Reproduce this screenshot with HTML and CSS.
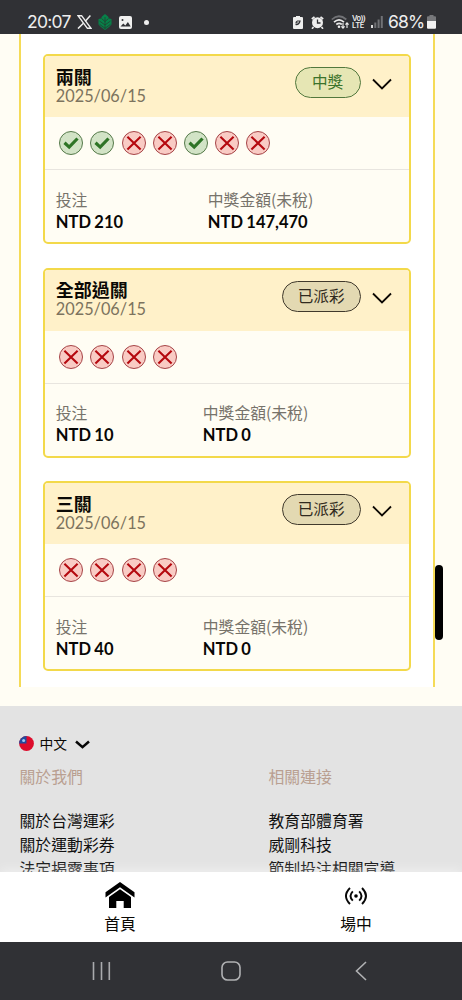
FILE: index.html
```html
<!DOCTYPE html>
<html lang="zh-Hant">
<head>
<meta charset="utf-8">
<title>投注紀錄</title>
<link rel="stylesheet" href="styles.css">
</head>
<body>
<svg class="defs" width="0" height="0">
  <symbol id="win" viewBox="0 0 24 24"><circle cx="12" cy="12" r="11.5" fill="#d2e3c6" stroke="#55794a" stroke-width="1"/><path d="M5.500 11.800l4.700 4.300 8.300-8.600" fill="none" stroke="#2e7426" stroke-width="3.2"/></symbol>
  <symbol id="lose" viewBox="0 0 24 24"><circle cx="12" cy="12" r="11.5" fill="#f9cbc4" stroke="#a54447" stroke-width="1"/><path d="M5.4 5.7l13.2 12.8M18.6 5.7L5.4 18.5" fill="none" stroke="#b5090f" stroke-width="2.1"/></symbol>
  <symbol id="down" viewBox="0 0 20 12"><path d="M1 1.5l9 9 9-9" fill="none" stroke="#0d0904" stroke-width="1.8"/></symbol>
</svg>
<div class="screen">
  <header class="status">
    <span class="time">20:07</span>
    <svg class="x-logo" width="15" height="14" viewBox="0 0 15 14"><path d="M1 .7h3.6L14 13.3h-3.6z" fill="none" stroke="#eee" stroke-width="1.4"/><path d="M13.4.5L8.3 6.2M6.4 8.2L1 13.6" stroke="#eee" stroke-width="1.5"/></svg>
    <svg class="leaf" width="14" height="16" viewBox="0 0 14 16"><path d="M7 0l3 2.500 1 2 2.500.5v5.500L11 13l-4 3-4-3-2.500-2.500V5L3 4.500l1-2z" fill="#078149"/><path d="M7 3v12M7 7.500L3.500 4.500M7 7.500l3.500-3M7 11L1.500 7M7 11l5.500-4M7 14.300l-5.500-4M7 14.300l5.500-4" stroke="#26382f" stroke-width=".7" fill="none"/></svg>
    <svg class="photo" width="13" height="13" viewBox="0 0 13 13"><rect width="13" height="13" rx="2" fill="#f0f0f0"/><path d="M1.500 10.500l2.800-3 2 2 2.600-3.500 2.800 4.500z" fill="#303135"/><circle cx="3.500" cy="4" r="1" fill="#303135"/></svg>
    <i class="dot"></i>
    <span class="grow"></span>
    <svg class="saver" width="10" height="13" viewBox="0 0 10 13"><path d="M3 0h4v1h2q1 0 1 1v10q0 1-1 1H1q-1 0-1-1V2q0-1 1-1h2z" fill="#eee"/><path d="M2.500 8.500q3.500 1 4.500-3.500H4.500q-1.500.5-1.500 2h2.500" fill="none" stroke="#303135" stroke-width="1.200"/></svg>
    <svg class="alarm" width="13" height="13" viewBox="0 0 13 13"><circle cx="6.500" cy="6.700" r="5.500" fill="#eee"/><path d="M.8 3L3.500.8M12.200 3L9.500.8M2.500 11L1 12.700M10.500 11l1.500 1.700" stroke="#eee" stroke-width="1.700"/><path d="M6.500 3.500v3.500h3" fill="none" stroke="#303135" stroke-width="1.300"/></svg>
    <svg class="wifi" width="18" height="14" viewBox="0 0 18 14"><g fill="none" stroke-width="1.700"><path d="M.8 4.500q7-6.500 14.500 0" stroke="#717276"/><path d="M3 7.200q5-4.500 10 0M5.300 9.500q3-2.300 5.500 0" stroke="#e9e9e9"/></g><circle cx="8" cy="11.800" r="1.300" fill="#eee"/><path d="M12 8v5M10.400 11.300l1.600 1.900 1.600-1.900M16 13V8M14.500 9.700L16 7.900l1.600 1.800" fill="none" stroke="#eee" stroke-width="1.100"/></svg>
    <span class="lte"><b>Vo))</b><b>LTE</b></span>
    <svg class="signal" width="12" height="12" viewBox="0 0 12 12"><path d="M0 9h2v3H0z" fill="#ddd"/><path d="M3.300 6.500h2V12h-2zM6.600 3.500h2V12h-2zM9.800 0h2v12h-2z" fill="#717276"/></svg>
    <span class="percent">68%</span>
    <svg class="battery" width="9" height="14" viewBox="0 0 9 14"><path d="M2.500 0h4v1.300H8q1 0 1 1V6H0V2.300q0-1 1-1h1.500z" fill="#77787b"/><path d="M0 6h9v6.500q0 1.300-1 1.300H1q-1 0-1-1.300z" fill="#f2f2f2"/></svg>
  </header>

  <main class="page">
    <section class="panel">
      <article class="card">
        <div class="head"><div class="name"><h2>兩關</h2><time>2025/06/15</time></div><span class="badge won">中獎</span><svg class="chev"><use href="#down"/></svg></div>
        <div class="marks"><svg><use href="#win"/></svg><svg><use href="#win"/></svg><svg><use href="#lose"/></svg><svg><use href="#lose"/></svg><svg><use href="#win"/></svg><svg><use href="#lose"/></svg><svg><use href="#lose"/></svg></div>
        <dl class="sums wide"><div><dt>投注</dt><dd>NTD 210</dd></div><div><dt>中獎金額(未稅)</dt><dd>NTD 147,470</dd></div></dl>
      </article>
      <article class="card">
        <div class="head"><div class="name"><h2>全部過關</h2><time>2025/06/15</time></div><span class="badge">已派彩</span><svg class="chev"><use href="#down"/></svg></div>
        <div class="marks"><svg><use href="#lose"/></svg><svg><use href="#lose"/></svg><svg><use href="#lose"/></svg><svg><use href="#lose"/></svg></div>
        <dl class="sums"><div><dt>投注</dt><dd>NTD 10</dd></div><div><dt>中獎金額(未稅)</dt><dd>NTD 0</dd></div></dl>
      </article>
      <article class="card">
        <div class="head"><div class="name"><h2>三關</h2><time>2025/06/15</time></div><span class="badge">已派彩</span><svg class="chev"><use href="#down"/></svg></div>
        <div class="marks"><svg><use href="#lose"/></svg><svg><use href="#lose"/></svg><svg><use href="#lose"/></svg><svg><use href="#lose"/></svg></div>
        <dl class="sums"><div><dt>投注</dt><dd>NTD 40</dd></div><div><dt>中獎金額(未稅)</dt><dd>NTD 0</dd></div></dl>
      </article>
    </section>
    <i class="thumb"></i>
  </main>

  <footer class="footer">
    <div class="lang">
      <svg class="flag" width="15" height="15" viewBox="0 0 15 15"><circle cx="7.500" cy="7.500" r="7.400" fill="#dd0c2c"/><path d="M7.500 7.500V.1A7.400 7.400 0 0 0 .1 7.500z" fill="#214b9e"/><circle cx="4.600" cy="4.400" r="1.500" fill="#9fc8f3"/></svg>
      <span>中文</span>
      <svg class="lang-chev" width="15" height="9" viewBox="0 0 15 9"><path d="M1 1.500l6.500 5.700L14 1.500" fill="none" stroke="#080808" stroke-width="2.500"/></svg>
    </div>
    <div class="links">
      <div><h3>關於我們</h3><p>關於台灣運彩</p><p>關於運動彩券</p><p>法定揭露事項</p></div>
      <div><h3>相關連接</h3><p>教育部體育署</p><p>威剛科技</p><p>節制投注相關宣導</p></div>
    </div>
  </footer>

  <nav class="tabs">
    <a class="home"><svg width="30" height="27" viewBox="0 0 30 27"><path d="M15 0l14.500 10.200v5.300L15 5.200.5 15.500v-5.300z" fill="#000"/><path d="M15 7.300l11 7.800V26h-7.300v-7h-7.400v7H4V15.100z" fill="#000"/></svg><span>首頁</span></a>
    <a class="live"><svg width="24" height="20" viewBox="0 0 24 20"><g fill="none" stroke="#080808" stroke-width="1.900"><path d="M6 2Q-2 10 6 18M18 2q8 8 0 16M8.800 5.300q-4.600 4.700 0 9.400M15.200 5.300q4.600 4.700 0 9.400"/></g><circle cx="12" cy="10" r="1.800"/></svg><span>場中</span></a>
  </nav>
  <div class="system">
    <svg width="20" height="20" viewBox="0 0 20 20"><path d="M2.500 1v18M10.500 1v18M18.300 1v18" stroke="#a9aaad" stroke-width="1.600"/></svg>
    <svg width="20" height="20" viewBox="0 0 20 20"><rect x="1" y="1" width="18" height="18" rx="5.500" fill="none" stroke="#b0b1b3" stroke-width="1.600"/></svg>
    <svg width="20" height="20" viewBox="0 0 20 20"><path d="M15 1L5.500 10l9.500 9" fill="none" stroke="#b0b1b3" stroke-width="1.600"/></svg>
  </div>
</div>
</body>
</html>
```

FILE: styles.css
```css
* { box-sizing: border-box; margin: 0; padding: 0; }
body { font-family: Lato, "Noto Sans CJK TC", sans-serif; color: #0b0905; }
svg { display: block; flex: none; }
.defs { position: absolute; }
.screen { width: 462px; height: 1000px; overflow: hidden; display: flex; flex-direction: column; }

.status { height: 34px; flex: none; background: #303135; color: #eee; display: flex; align-items: center; padding: 10px 26px 0 27px; font: 17.500px/24px Inter, sans-serif; }
.time { width: 44px; letter-spacing: -.75px; }
.x-logo { margin-left: 6px; }
.leaf { margin-left: 6px; }
.photo { margin-left: 7px; }
.dot { width: 5px; height: 5px; border-radius: 50%; background: #eee; margin-left: 12px; }
.grow { flex: 1; }
.alarm { margin-left: 8px; }
.wifi { margin-left: 7px; }
.lte { width: 14px; margin-left: 3px; font: 7.500px/7px Inter, sans-serif; }
.lte b { display: block; font-weight: 600; white-space: nowrap; letter-spacing: -.4px; }
.signal { margin-left: 5px; }
.percent { width: 36px; margin-left: 5px; letter-spacing: -.8px; }
.battery { margin-left: 3px; }

.page { position: relative; height: 672px; flex: none; background: #fffdf4; padding: 0 27.500px 19px 19.300px; }
.panel { height: 653px; background: #fff; border: solid #f5db57; border-width: 0 2px; padding: 20px 22px 0; display: flex; flex-direction: column; gap: 23.500px; }
.card { height: 190px; flex: none; border: 2px solid #f3d94a; border-radius: 5px; background: #fffdf4; overflow: hidden; }
.head { height: 61px; background: #fff1c9; display: flex; padding: 11px 17px 0 10.500px; }
.name { flex: 1; margin-top: -.500px; }
h2 { font-size: 18px; line-height: 20px; font-weight: 700; }
time { display: block; font-size: 16.300px; line-height: 18.500px; color: #7c735e; }
.badge { height: 31px; border: 1px solid #40392c; border-radius: 16px; background: #e3d9b2; padding: 0 15px; font-size: 15.600px; line-height: 28.500px; color: #302a20; }
.won { border-color: #52783d; background: #e6e6b4; color: #3b732b; padding: 0 16.300px; }
.chev { width: 20px; height: 12px; margin: 11px 0 0 11px; }
.marks { height: 53px; border-bottom: 1px solid #e8e5df; padding: 14px 0 0 14px; display: flex; gap: 7.200px; }
.marks svg { width: 24px; height: 24px; }
.sums { display: grid; grid-template-columns: 147px 1fr; padding: 18.500px 10.500px 0; }
.wide { grid-template-columns: 152px 1fr; }
dt { font-family: "Noto Sans CJK TC", sans-serif; font-size: 15.800px; line-height: 22px; color: #77736b; }
dd { font-size: 16.500px; line-height: 23.500px; font-weight: 700; color: #080705; word-spacing: -.600px; }
.thumb { position: absolute; left: 434.500px; top: 531px; width: 8.500px; height: 75px; border-radius: 4px; background: #000; }

.footer { height: 166px; flex: none; overflow: hidden; background: #e3e3e3; padding: 27px 19.500px 0; }
.lang { height: 22px; display: flex; align-items: center; font-size: 13.800px; line-height: 22px; }
.flag { margin: -1px 0 0 -.500px; }
.lang span { margin-left: 5.500px; }
.lang-chev { margin-left: 7.500px; }
.links { display: grid; grid-template-columns: 249px 1fr; padding-top: 10px; }
h3 { height: 43.500px; font-size: 15.850px; line-height: 24px; font-weight: 400; color: #b99f91; }
.links p { font-size: 15.850px; line-height: 24.300px; color: #111; }

.tabs { position: relative; height: 70px; flex: none; background: #fff; box-shadow: 0 -3px 10px rgba(255, 255, 255, .4); display: flex; font-size: 15.800px; line-height: 22px; }
.tabs a { display: flex; flex-direction: column; align-items: center; padding-top: 10px; }
.tabs .home { width: 240px; }
.tabs .live { width: 222px; padding-left: 10px; }
.live svg { margin: 4px 0 3px; }
.tabs span { margin-top: 4px; }
.system { position: relative; height: 58px; flex: none; background: #303135; display: flex; align-items: center; padding: 0 91px 1px; justify-content: space-between; }
```
